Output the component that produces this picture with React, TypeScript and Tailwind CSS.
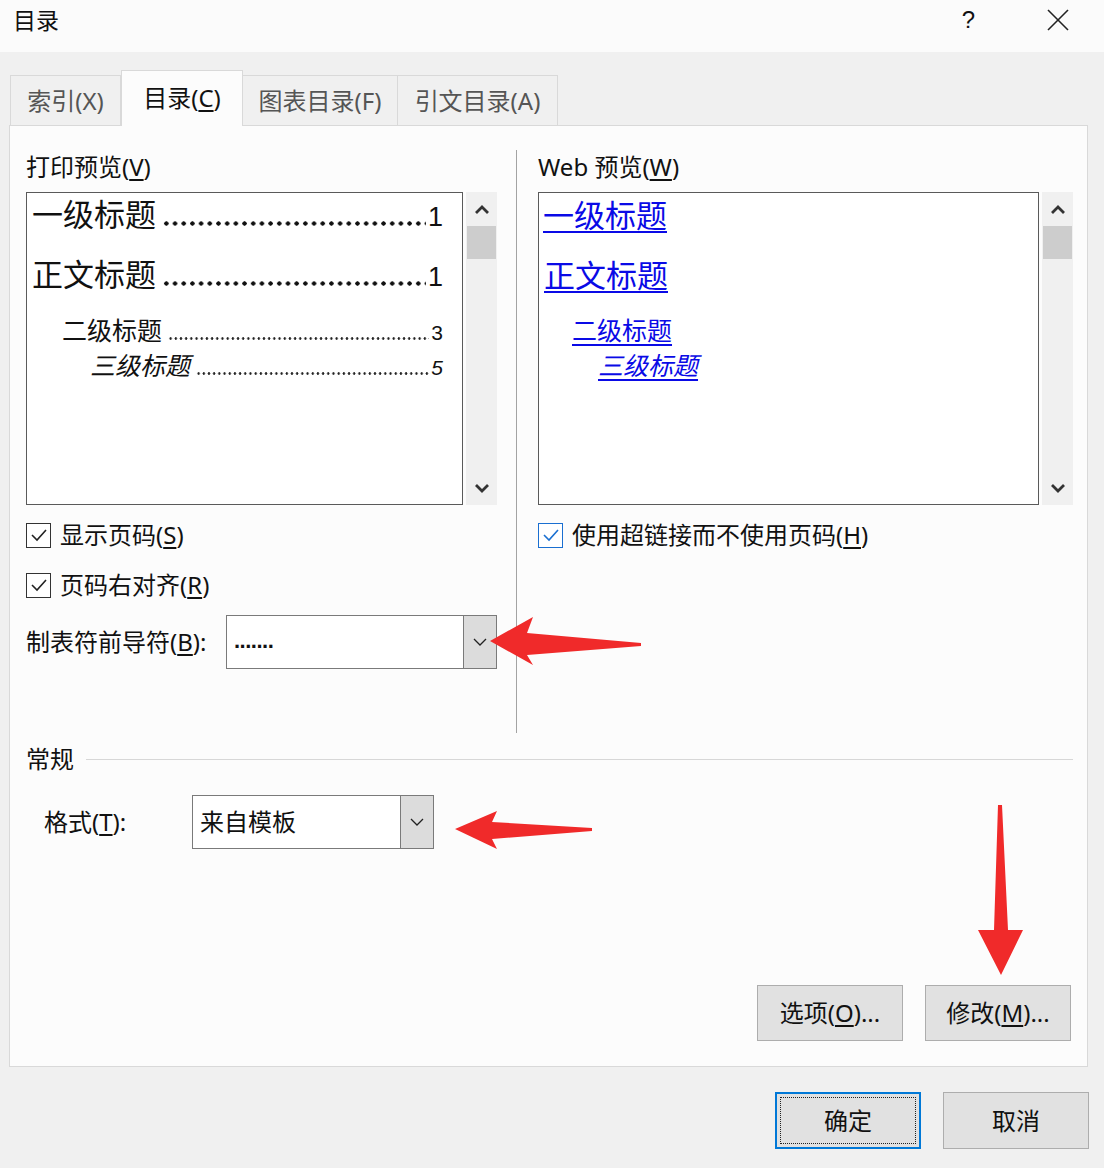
import React from "react";

const U = ({ c }: { c: string }) => (
  <span className="underline underline-offset-[3px] decoration-[1.5px]">{c}</span>
);

const Chevron = ({ up }: { up?: boolean }) => (
  <svg width="16" height="11" viewBox="0 0 16 11">
    <polyline
      points={up ? "2,9 8,3 14,9" : "2,2 8,8 14,2"}
      fill="none"
      stroke="#333"
      strokeWidth="2.8"
    />
  </svg>
);

const ComboChevron = () => (
  <svg width="14" height="8" viewBox="0 0 14 8">
    <polyline points="1,1 7,7 13,1" fill="none" stroke="#222" strokeWidth="1.3" />
  </svg>
);

const CheckBox = ({ blue }: { blue?: boolean }) => (
  <div
    className={
      blue
        ? "w-[25px] h-[25px] border-[1.5px] border-[#1a6fd1] bg-white flex items-center justify-center"
        : "w-[25px] h-[25px] border-[1.5px] border-[#333333] bg-white flex items-center justify-center"
    }
  >
    <svg width="18" height="14" viewBox="0 0 18 14">
      <polyline
        points="2,7 7,12 16,2"
        fill="none"
        stroke={blue ? "#1a6fd1" : "#222"}
        strokeWidth="1.6"
      />
    </svg>
  </div>
);

const ScrollBar = () => (
  <div className="w-[31px] h-full bg-[#f0f0f0] flex flex-col items-center">
    <div className="h-[34px] flex items-center justify-center">
      <Chevron up />
    </div>
    <div className="w-[29px] h-[33px] bg-[#cdcdcd]" />
    <div className="flex-1" />
    <div className="h-[34px] flex items-center justify-center">
      <Chevron />
    </div>
  </div>
);

const PrintRow = ({
  text,
  num,
  h,
  pl,
  size,
  dots,
  numSize,
  italic,
}: {
  text: string;
  num: string;
  h: string;
  pl: string;
  size: string;
  dots: string;
  numSize: string;
  italic?: boolean;
}) => (
  <div className={`flex items-center ${h} ${pl} pr-[19px]`}>
    <div className="flex items-baseline w-full">
      <span className={`${size} leading-none whitespace-nowrap ${italic ? "italic" : ""}`}>{text}</span>
      <span className={`flex-1 ml-[6px] mr-[2px] bg-repeat-x ${dots}`} />
      <span className={`${numSize} leading-none font-['Liberation_Sans',sans-serif] ${italic ? "italic" : ""}`}>
        {num}
      </span>
    </div>
  </div>
);

const WebRow = ({
  text,
  h,
  pl,
  size,
  italic,
}: {
  text: string;
  h: string;
  pl: string;
  size: string;
  italic?: boolean;
}) => (
  <div className={`flex items-center ${h} ${pl}`}>
    <span
      className={`${size} leading-none text-[#0a0ae6] underline decoration-2 underline-offset-[4px] whitespace-nowrap ${
        italic ? "italic" : ""
      }`}
    >
      {text}
    </span>
  </div>
);

const BIG_DOTS =
  "h-[5px] bg-[radial-gradient(circle,#111_1.9px,transparent_2.4px)] bg-[length:8.7px_5px]";
const SMALL_DOTS =
  "h-[3px] bg-[radial-gradient(circle,#222_1px,transparent_1.5px)] bg-[length:5.2px_3px]";

export default function App() {
  return (
    <div className="relative w-[1104px] h-[1168px] bg-[#f0f0f0] overflow-hidden font-['Noto_Sans','Noto_Sans_CJK_SC',sans-serif] text-[#111]">
      {/* title bar */}
      <div className="h-[52px] bg-[#fbfbfb] flex items-start pt-[7px] pl-[13px] pr-[34px]">
        <span className="text-[23px] leading-[26px]">目录</span>
        <div className="flex-1" />
        <span className="text-[24px] leading-[26px] mr-[71px] font-['Liberation_Sans',sans-serif]">?</span>
        <svg width="24" height="24" viewBox="0 0 24 24" className="mt-[1px]">
          <line x1="2" y1="2" x2="22" y2="22" stroke="#222" strokeWidth="1.6" />
          <line x1="22" y1="2" x2="2" y2="22" stroke="#222" strokeWidth="1.6" />
        </svg>
      </div>

      {/* tabs */}
      <div className="relative z-10 flex items-end pl-[10px] mt-[18px] h-[56px] -mb-px">
        <div className="w-[111px] h-[50px] mb-px border border-b-0 border-[#d9d9d9] bg-[#f0f0f0] flex items-center justify-center text-[24px] text-[#555]">
          索引(X)
        </div>
        <div className="w-[122px] h-[56px] border border-b-0 border-[#d9d9d9] bg-[#fcfcfc] flex items-center justify-center text-[24px] text-[#111] pb-[2px]">
          <span>
            目录(<U c="C" />)
          </span>
        </div>
        <div className="w-[155px] h-[50px] mb-px border border-b-0 border-l-0 border-[#d9d9d9] bg-[#f0f0f0] flex items-center justify-center text-[24px] text-[#555]">
          图表目录(F)
        </div>
        <div className="w-[160px] h-[50px] mb-px border border-b-0 border-l-0 border-[#d9d9d9] bg-[#f0f0f0] flex items-center justify-center text-[24px] text-[#555]">
          引文目录(A)
        </div>
      </div>

      {/* panel */}
      <div className="ml-[9px] w-[1079px] h-[942px] border border-[#d9d9d9] bg-[#fcfcfc] pl-[16px] pr-[14px] flex flex-col">
        <div className="mt-[24px] h-[583px] flex">
          {/* left */}
          <div className="w-[471px] flex flex-col">
            <div className="mt-[2px] h-[30px] leading-[30px] text-[24px]">
              打印预览(<U c="V" />)
            </div>
            <div className="mt-[10px] h-[313px] flex gap-[3px]">
              <div className="w-[437px] h-full border border-[#5a5a5a] bg-white text-[#111]">
                <PrintRow text="一级标题" num="1" h="h-[44px]" pl="pl-[5px]" size="text-[31px]" dots={BIG_DOTS} numSize="text-[27px]" />
                <PrintRow text="正文标题" num="1" h="h-[76px]" pl="pl-[5px]" size="text-[31px]" dots={BIG_DOTS} numSize="text-[27px]" />
                <PrintRow text="二级标题" num="3" h="h-[34px]" pl="pl-[35px]" size="text-[25px]" dots={SMALL_DOTS} numSize="text-[21px]" />
                <PrintRow text="三级标题" num="5" h="h-[36px]" pl="pl-[63px]" size="text-[25px]" dots={SMALL_DOTS} numSize="text-[21px]" italic />
              </div>
              <ScrollBar />
            </div>
            <div className="mt-[18px] h-[24px] flex items-center gap-[9px]">
              <CheckBox />
              <span className="text-[24px] leading-none">
                显示页码(<U c="S" />)
              </span>
            </div>
            <div className="mt-[26px] h-[24px] flex items-center gap-[9px]">
              <CheckBox />
              <span className="text-[24px] leading-none">
                页码右对齐(<U c="R" />)
              </span>
            </div>
            <div className="mt-[18px] h-[54px] flex items-center">
              <span className="text-[24px] leading-none">
                制表符前导符(<U c="B" />):
              </span>
              <div className="ml-auto w-[271px] h-full border border-[#7a7a7a] bg-white flex">
                <div className="flex-1 flex items-center pl-[7px] pb-[4px] text-[22px] font-bold font-['Liberation_Sans',sans-serif] tracking-[-0.5px]">
                  .......
                </div>
                <div className="w-[33px] h-full bg-[#dcdcdc] border-l border-[#7a7a7a] flex items-center justify-center">
                  <ComboChevron />
                </div>
              </div>
            </div>
          </div>

          {/* separator */}
          <div className="ml-[19px] w-px bg-[#a3a3a3]" />

          {/* right */}
          <div className="ml-[21px] flex-1 flex flex-col">
            <div className="mt-[2px] h-[30px] leading-[30px] text-[24px]">
              Web 预览(<U c="W" />)
            </div>
            <div className="mt-[10px] h-[313px] flex gap-[3px]">
              <div className="w-[501px] h-full border border-[#5a5a5a] bg-white">
                <WebRow text="一级标题" h="h-[44px]" pl="pl-[4px]" size="text-[31px]" />
                <WebRow text="正文标题" h="h-[76px]" pl="pl-[5px]" size="text-[31px]" />
                <WebRow text="二级标题" h="h-[34px]" pl="pl-[33px]" size="text-[25px]" />
                <WebRow text="三级标题" h="h-[36px]" pl="pl-[59px]" size="text-[25px]" italic />
              </div>
              <ScrollBar />
            </div>
            <div className="mt-[18px] h-[24px] flex items-center gap-[9px]">
              <CheckBox blue />
              <span className="text-[24px] leading-none">
                使用超链接而不使用页码(<U c="H" />)
              </span>
            </div>
          </div>
        </div>

        {/* general */}
        <div className="mt-[11px] h-[30px] flex items-center">
          <span className="text-[24px] leading-none">常规</span>
          <div className="ml-[12px] flex-1 h-px bg-[#d7d7d7]" />
        </div>
        <div className="mt-[21px] h-[54px] flex items-center pl-[18px]">
          <span className="w-[148px] text-[24px] leading-none">
            格式(<U c="T" />):
          </span>
          <div className="w-[242px] h-full border border-[#7a7a7a] bg-white flex">
            <div className="flex-1 flex items-center pl-[7px] text-[24px]">来自模板</div>
            <div className="w-[33px] h-full bg-[#dcdcdc] border-l border-[#7a7a7a] flex items-center justify-center">
              <ComboChevron />
            </div>
          </div>
        </div>

        <div className="mt-[136px] flex justify-end gap-[22px] mr-[2px]">
          <div className="w-[146px] h-[56px] bg-[#e1e1e1] border border-[#adadad] flex items-center justify-center text-[24px]">
            <span>
              选项(<U c="O" />)...
            </span>
          </div>
          <div className="w-[146px] h-[56px] bg-[#e1e1e1] border border-[#adadad] flex items-center justify-center text-[24px]">
            <span>
              修改(<U c="M" />)...
            </span>
          </div>
        </div>
      </div>

      {/* dialog buttons */}
      <div className="mt-[25px] flex justify-end gap-[22px] pr-[15px]">
        <div className="w-[146px] h-[57px] bg-[#e1e1e1] border-2 border-[#0078d7] p-[3px]">
          <div className="w-full h-full border border-dotted border-[#222] flex items-center justify-center text-[24px]">
            确定
          </div>
        </div>
        <div className="w-[146px] h-[57px] bg-[#e1e1e1] border border-[#adadad] flex items-center justify-center text-[24px]">
          取消
        </div>
      </div>

      {/* red annotation arrows */}
      <svg className="absolute left-0 top-0 pointer-events-none" width="1104" height="1168" viewBox="0 0 1104 1168">
        <polygon points="490,641 533,617 527,633 641,643 641,646 527,655 533,665" fill="#f02a2a" />
        <polygon points="455,829 497,811 492,822 592,828 592,831 492,839 497,849" fill="#f02a2a" />
        <polygon points="1001,975 978,930 994,930 998,805 1002,805 1008,930 1023,930" fill="#f02a2a" />
      </svg>
    </div>
  );
}
